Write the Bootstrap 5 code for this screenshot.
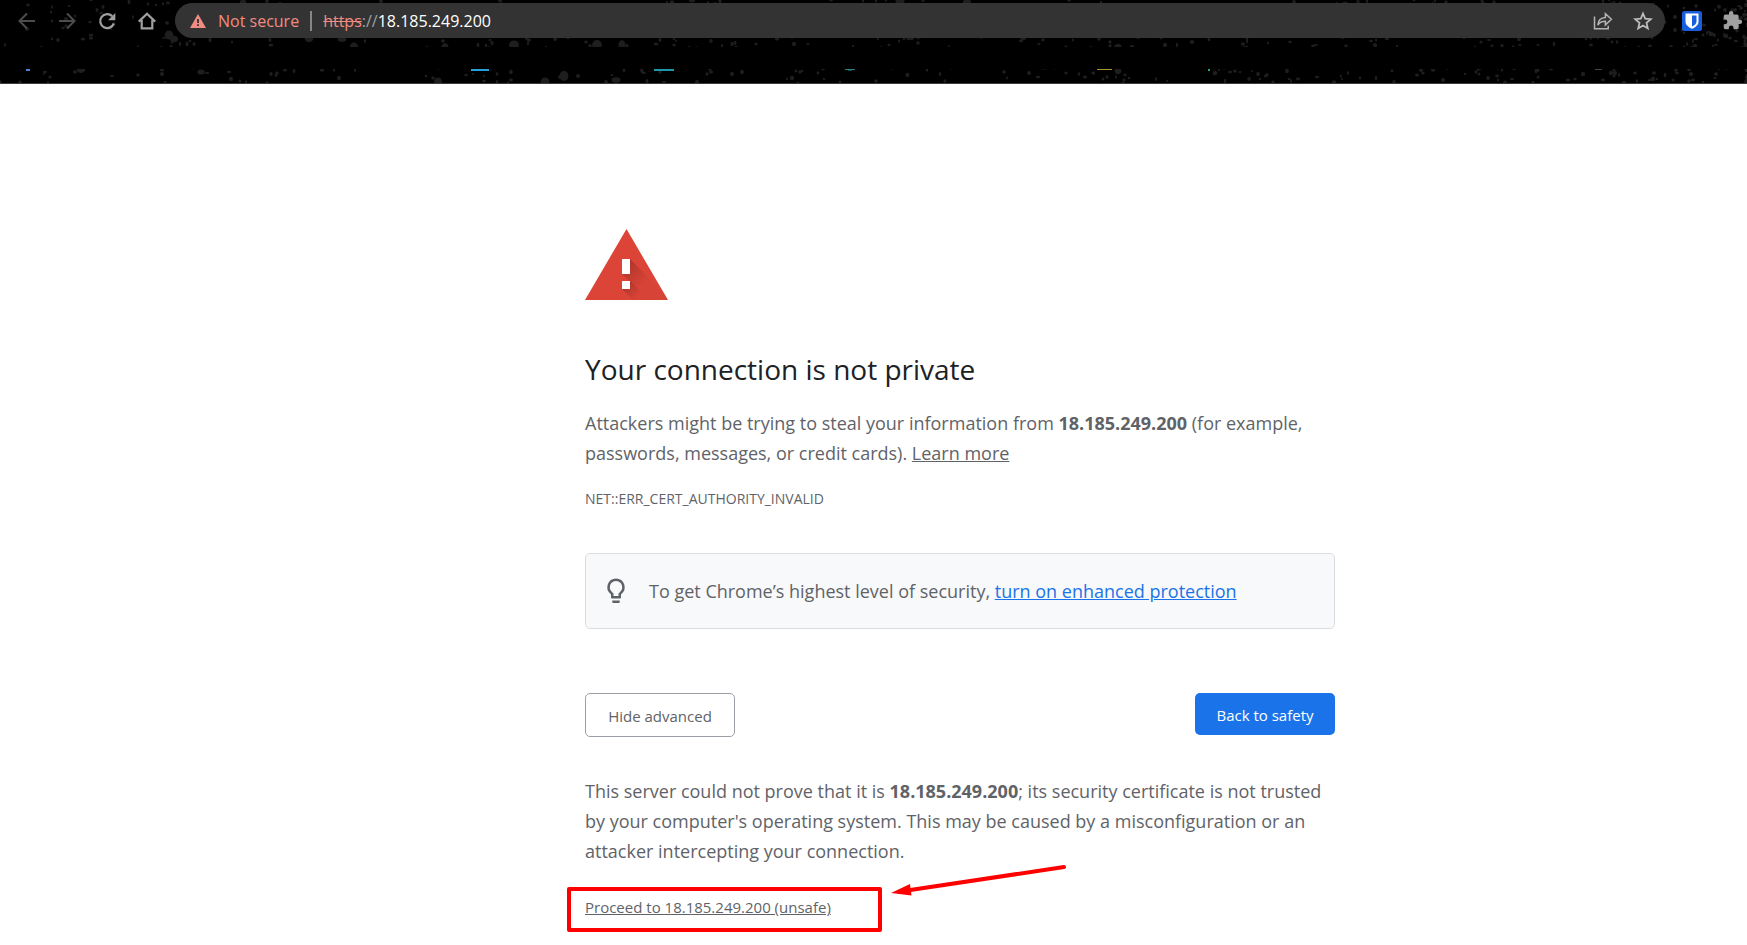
<!DOCTYPE html>
<html lang="en">
<head>
<meta charset="utf-8">
<meta name="viewport" content="width=device-width, initial-scale=1">
<title>Privacy error</title>
<link rel="stylesheet" href="https://cdn.jsdelivr.net/npm/bootstrap@5.3.0/dist/css/bootstrap.min.css">
<style>
body{font-family:"Open Sans","Noto Sans",sans-serif;font-size:18px;line-height:30px;color:#5f6368;background:#fff}
svg{display:block;flex:none}
.chrome{background:#000;border-bottom:1px solid #3c3c3c;height:84px;overflow:hidden}
.specks{inset:0;width:100%;height:83px}
.toolbar{padding:3px 4px 0 17px;height:38px;gap:20px}
.icon-btn{background:none;border:0;padding:0;line-height:0}
.omnibox{background:#333;border-radius:18px;height:35px;padding:0 12px 0 14px;margin:0 -3px 0 -2px;font-size:16px;line-height:24px;gap:11px}
.insecure{color:#f28b82;gap:11px}
.divider{width:2px;height:20px;background:#868686}
.scheme{color:#9aa0a6}
.scheme s{color:#f28b82}
.host{color:#fff}
.page-area{padding:0 0 20px 173px}
.interstitial{max-width:750px;padding-top:145px}
h1{font-size:28px;line-height:35px;font-weight:400;color:#202124;margin:52px 0 21px}
a,a:hover{color:inherit}
.err{font-size:14px;line-height:20px;margin:21px 0 44px}
.promo{background:#f8f9fa;border:1px solid #dadce0;border-radius:5px;padding:22px 15px;margin-bottom:64px;gap:18px}
.promo a{color:#1a73e8}
.act{font-size:15px;line-height:20px;border-radius:5px;padding:12px 20px 10px;min-width:150px;border:1px solid #9aa0a6;background:#fff;color:#5f6368}
.act-primary{background:#1a73e8;border:0;color:#fff;min-width:140px}
.details{padding-top:39px}
.proceed{font-size:15px;line-height:20px;margin:31px 0 0}
.callout-box{left:-18px;top:-10px;width:315px;height:45px;border:4px solid #f00;border-radius:2px;pointer-events:none}
.callout-arrow{left:304px;top:-34px;pointer-events:none}
</style>
</head>
<body>
<header class="chrome position-relative">
  <svg class="specks position-absolute" aria-hidden="true">
    <g id="specks" fill="#1e1e1e"></g>
    <rect y="47" width="100%" height="22" fill="#000"/>
    <rect x="26" y="69" width="4" height="2" fill="#4285c8"/>
    <rect x="471" y="69" width="18" height="2" fill="#26a0da"/>
    <rect x="654" y="69" width="20" height="2" fill="#1c97ab"/>
    <rect x="845" y="69" width="10" height="1" fill="#2b7f88"/>
    <rect x="848" y="70" width="4" height="1" fill="#174b52"/>
    <rect x="1097" y="69" width="15" height="1" fill="#ab8f2c"/>
    <rect x="1208" y="69" width="2" height="2" fill="#26a68c"/>
    <rect x="1595" y="69" width="7" height="1" fill="#444"/>
  </svg>
  <div class="toolbar d-flex align-items-center position-relative">
    <button class="icon-btn" aria-label="Back"><svg width="20" height="20" viewBox="0 0 20 20" fill="none" stroke="#4c4c4c" stroke-width="2"><path d="M18 10H3M10 2.500L2.500 10l7.500 7.500"/></svg></button>
    <button class="icon-btn" aria-label="Forward"><svg width="20" height="20" viewBox="0 0 20 20" fill="none" stroke="#4c4c4c" stroke-width="2"><path d="M2 10h15M10 2.500l7.500 7.500-7.500 7.500"/></svg></button>
    <button class="icon-btn" aria-label="Reload"><svg width="20" height="20" viewBox="0 0 20 20"><path d="M16.800 12.500a7 7 0 1 1-1.600-7.400" fill="none" stroke="#a0a0a0" stroke-width="2.200"/><path d="M18.300 2v7.200h-7.200z" fill="#a0a0a0"/></svg></button>
    <button class="icon-btn" aria-label="Home"><svg width="20" height="20" viewBox="0 0 20 20" fill="none" stroke="#a0a0a0" stroke-width="2.200"><path d="M1.800 10.600L10 2.800l8.200 7.800M4.700 9v8.400h10.600V9"/></svg></button>
    <div class="omnibox d-flex align-items-center flex-grow-1">
      <span class="insecure d-flex align-items-center">
        <svg width="18" height="18" viewBox="0 0 18 18"><path d="M9 2l8 14H1z" fill="#f28b82"/><path d="M8.100 7h1.800v4H8.100zM8.100 12.200h1.800V14H8.100z" fill="#333"/></svg>
        Not secure</span>
      <span class="divider"></span>
      <span class="flex-grow-1"><span class="scheme"><s>https</s>://</span><span class="host">18.185.249.200</span></span>
      <span class="d-flex gap-3 align-items-center">
        <button class="icon-btn me-1" aria-label="Share"><svg width="20" height="20" viewBox="0 0 20 20" fill="none" stroke="#b4b4b4" stroke-width="1.500"><path d="M1.500 5.500v12.200h13.700v-3"/><path d="M4.800 14c.4-5 3-7.300 7.600-7.500V2.700l6 5.600-6 5.600v-3.700c-3.700 0-5.800 1-7.600 3.800z"/></svg></button>
        <button class="icon-btn" aria-label="Bookmark this page"><svg width="20" height="20" viewBox="0 0 20 20" fill="none" stroke="#bdbdbd" stroke-width="1.800"><path d="M10 2.500l2.200 5.200 5.600.5-4.300 3.700 1.300 5.500L10 14.500l-4.800 2.900 1.300-5.500-4.300-3.700 5.600-.5z"/></svg></button>
      </span>
    </div>
    <button class="icon-btn" aria-label="Password manager"><svg width="20" height="20" viewBox="0 0 20 20"><rect width="20" height="20" rx="2.500" fill="#175ddc"/><path d="M3.500 2.500h13v8c0 3.500-3 5.700-6.500 7.300-3.500-1.600-6.500-3.800-6.500-7.300z" fill="#fff"/><path d="M10 4.500h4.500v6c0 2.300-2 3.800-4.500 5.100z" fill="#175ddc"/></svg></button>
    <button class="icon-btn" aria-label="Extensions"><svg width="21" height="21" viewBox="0 0 24 24"><path fill="#a0a0a0" d="M20.500 11H19V7c0-1.100-.9-2-2-2h-4V3.500a2.500 2.500 0 0 0-5 0V5H4c-1.100 0-2 .9-2 2v3.800h1.500a2.700 2.700 0 0 1 0 5.400H2V20c0 1.100.9 2 2 2h3.800v-1.500a2.700 2.700 0 0 1 5.400 0V22H17c1.100 0 2-.9 2-2v-4h1.500a2.500 2.500 0 0 0 0-5z"/></svg></button>
  </div>
</header>
<main class="page-area">
  <div class="interstitial mx-auto">
    <svg width="83" height="71" viewBox="0 0 83 71" role="img" aria-label="Warning">
      <defs>
        <linearGradient id="shade" gradientUnits="userSpaceOnUse" x1="38" y1="38" x2="56" y2="56"><stop stop-color="#000" stop-opacity=".2"/><stop offset="1" stop-color="#000" stop-opacity=".02"/></linearGradient>
        <linearGradient id="shade-dot" gradientUnits="userSpaceOnUse" x1="41" y1="56" x2="52" y2="67"><stop stop-color="#000" stop-opacity=".2"/><stop offset="1" stop-color="#000" stop-opacity=".02"/></linearGradient>
        <clipPath id="tri"><path d="M41.500 0L83 71H0z"/></clipPath>
      </defs>
      <path d="M41.500 0L83 71H0z" fill="#db4437"/>
      <g clip-path="url(#tri)"><path d="M45 30l41 41H63L37 45z" fill="url(#shade)"/><path d="M45 52l19 19H48L37 60z" fill="url(#shade-dot)"/></g>
      <path d="M37 30h8v15h-8zM37 52h8v8h-8z" fill="#fff"/>
    </svg>
    <h1>Your connection is not private</h1>
    <p class="m-0">Attackers might be trying to steal your information from <strong>18.185.249.200</strong> (for example, passwords, messages, or credit cards). <a href="#">Learn more</a></p>
    <p class="err">NET::ERR_CERT_AUTHORITY_INVALID</p>
    <div class="promo d-flex align-items-center">
      <svg width="30" height="30" viewBox="0 0 24 24" fill="#5f6368" aria-hidden="true"><path d="M12 2a7 7 0 0 0-4 12.700V17c0 .6.400 1 1 1h6c.6 0 1-.4 1-1v-2.300A7 7 0 0 0 12 2zm2.900 11.100l-.9.600V16h-4v-2.300l-.9-.6a5 5 0 1 1 5.800 0z"/><path d="M9 19.500h6v1c0 .6-.4 1-1 1h-4c-.6 0-1-.4-1-1z"/></svg>
      <span>To get Chrome’s highest level of security, <a href="#">turn on enhanced protection</a></span>
    </div>
    <div class="d-flex justify-content-between align-items-start">
      <button class="act">Hide advanced</button>
      <button class="act act-primary">Back to safety</button>
    </div>
    <div class="details">
      <p class="m-0">This server could not prove that it is <strong>18.185.249.200</strong>; its security certificate is not trusted by your computer's operating system. This may be caused by a misconfiguration or an attacker intercepting your connection.</p>
      <p class="proceed position-relative">
        <a href="#">Proceed to 18.185.249.200 (unsafe)</a>
        <span class="callout-box position-absolute"></span>
        <svg class="callout-arrow position-absolute" width="180" height="38" viewBox="0 0 180 38" aria-hidden="true"><path d="M175 4L18 27.500" stroke="#f00" stroke-width="4" stroke-linecap="round"/><path d="M2 30l19-9 1.500 11.500z" fill="#f00"/></svg>
      </p>
    </div>
  </div>
</main>
<script src="https://cdn.jsdelivr.net/npm/bootstrap@5.3.0/dist/js/bootstrap.bundle.min.js"></script>
<script>
  // Speckled theme texture behind the toolbar, denser towards the right edge
  let seed = 7;
  const rnd = () => (seed = (seed * 16807) % 2147483647) / 2147483647;
  const width = window.innerWidth;
  let shapes = '';
  for (let i = 0; i < 1000; i++) {
    const x = Math.round(width * (i % 2 ? rnd() : 1 - Math.pow(rnd(), 2)));
    const y = Math.round(rnd() * 83);
    const big = rnd() > .9 && x < width * .7;
    const rx = big ? 3 + rnd() * 2 : 1 + rnd() * 1.3;
    const ry = big ? 2 + rnd() * 3 : 1 + rnd() * 1.3;
    shapes += `<ellipse cx="${x}" cy="${y}" rx="${rx.toFixed(1)}" ry="${ry.toFixed(1)}"/>`;
  }
  document.getElementById('specks').innerHTML = shapes;
</script>
</body>
</html>
